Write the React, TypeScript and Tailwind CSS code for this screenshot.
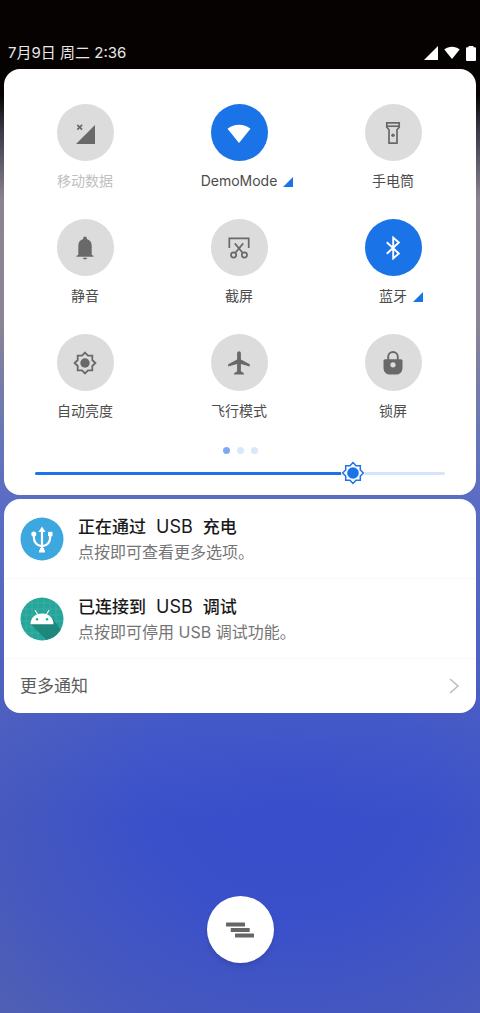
import React, { useState } from 'react';

interface Tile {
    label: string;
    icon: React.ReactNode;
    active?: boolean;
    disabled?: boolean;
    expandable?: boolean;
}

interface Notice {
    title: [string, string];
    text: string;
    icon: React.ReactNode;
}

const MAX_BRIGHTNESS = 255;

const STAR =
    'M12 1.6l3 3.1h4.3V9l3.1 3-3.1 3v4.3H15l-3 3.1-3-3.1H4.7V15l-3.1-3 3.1-3V4.7H9z';
const WEDGE = 'M12 22L.5 7.8C3.8 5 7.8 3.7 12 3.7s8.200 1.300 11.500 4.100z';

const Icon: React.FC<{ children: React.ReactNode }> = ({ children }) => (
    <svg viewBox="0 0 24 24" className="h-6 w-6" fill="currentColor" aria-hidden="true">
        {children}
    </svg>
);

const tiles: Tile[] = [
    {
        label: '移动数据',
        disabled: true,
        icon: (
            <Icon>
                <path d="M22 4v19H3z" />
                <path d="M4.300 3.800l4.800 4.800M9.100 3.800L4.300 8.600" stroke="currentColor" strokeWidth="1.700" />
            </Icon>
        ),
    },
    {
        label: 'DemoMode',
        active: true,
        expandable: true,
        icon: (
            <Icon>
                <path d={WEDGE} />
            </Icon>
        ),
    },
    {
        label: '手电筒',
        icon: (
            <Icon>
                <g fill="none" stroke="currentColor" strokeWidth="1.700">
                    <path d="M5.800 1.800h12.400v4.400l-2.200 2.600v13.400H8V8.800L5.800 6.200z" />
                    <path d="M5.800 5.200h12.400" />
                </g>
                <circle cx="12" cy="14.300" r="1.700" />
            </Icon>
        ),
    },
    {
        label: '静音',
        icon: (
            <Icon>
                <path d="M12 .5c1 0 1.800.8 1.800 1.800v.6c3 .8 4.900 3.300 4.900 6.500v9.300l1.800 1.200v.9h-17v-.9l1.800-1.200V9.400c0-3.200 1.900-5.700 4.900-6.500v-.6C10.200 1.300 11 .5 12 .5z" />
                <path d="M9.800 21.800h4.400c-.2 1.100-1.100 1.700-2.200 1.700s-2-.6-2.200-1.700z" />
            </Icon>
        ),
    },
    {
        label: '截屏',
        icon: (
            <Icon>
                <g fill="none" stroke="currentColor" strokeWidth="1.700">
                    <path d="M2.300 12V2.300h19.400V12" />
                    <circle cx="6.600" cy="19" r="2.600" />
                    <circle cx="17.400" cy="19" r="2.600" />
                    <path d="M8.200 17l8-9.600M15.800 17l-8-9.600" />
                </g>
            </Icon>
        ),
    },
    {
        label: '蓝牙',
        active: true,
        expandable: true,
        icon: (
            <Icon>
                <path
                    d="M5.800 6.200L17.800 17.500l-5.600 4.900V1.600l5.600 4.900L5.800 17.800"
                    fill="none"
                    stroke="currentColor"
                    strokeWidth="1.900"
                />
            </Icon>
        ),
    },
    {
        label: '自动亮度',
        icon: (
            <Icon>
                <path d={STAR} fill="none" stroke="currentColor" strokeWidth="1.800" />
                <circle cx="12" cy="12" r="4.700" />
            </Icon>
        ),
    },
    {
        label: '飞行模式',
        icon: (
            <Icon>
                <path d="M12 .3c-1.100 0-1.900.8-1.900 1.900v6.300L1.200 13.200v2.200l8.900-2.500v7.400l-3 2v1.200h9.800v-1.200l-3-2v-7.400l8.900 2.500v-2.200l-8.900-4.700V2.200c0-1.100-.8-1.900-1.900-1.900z" />
            </Icon>
        ),
    },
    {
        label: '锁屏',
        icon: (
            <Icon>
                <path d="M7.200 9V5.800a4.800 4.800 0 019.600 0V9" fill="none" stroke="currentColor" strokeWidth="1.900" />
                <path
                    fillRule="evenodd"
                    d="M4 8.200h16a1.500 1.500 0 011.500 1.500v7.500a6.300 6.300 0 01-6.300 6.300H8.800a6.300 6.300 0 01-6.300-6.300V9.700A1.500 1.500 0 014 8.200zm8 3a2.600 2.600 0 100 5.200 2.600 2.600 0 000-5.200z"
                />
            </Icon>
        ),
    },
];

const UsbIcon: React.FC = () => (
    <svg viewBox="0 0 44 44" className="h-11 w-11 shrink-0" aria-hidden="true">
        <circle cx="22" cy="22" r="21.500" fill="#3da7e0" />
        <g fill="none" stroke="#fff" strokeWidth="2.200">
            <path d="M22 14v19" />
            <path d="M13.800 17.500v2.500c0 5 3.200 8.500 8.200 9.300 5-.8 8.200-4.300 8.200-9.300v-2.500" />
        </g>
        <g fill="#fff">
            <path d="M22 9.500l3.500 5.500h-7z" />
            <circle cx="13.800" cy="17" r="2.500" />
            <path d="M28 14.800h4.500v4.400H28z" />
            <path d="M20 31h4v1.500l1 1v2h-6v-2l1-1z" />
        </g>
    </svg>
);

const AndroidIcon: React.FC = () => (
    <svg viewBox="0 0 44 44" className="h-11 w-11 shrink-0" aria-hidden="true">
        <clipPath id="disc">
            <circle cx="22" cy="22" r="21.500" />
        </clipPath>
        <g clipPath="url(#disc)">
            <path d="M0 0h44v44H0z" fill="#26a69a" />
            <path
                d="M6 0v44M12 0v44M18 0v44M24 0v44M30 0v44M36 0v44M0 6h44M0 12h44M0 18h44M0 24h44M0 30h44M0 36h44"
                stroke="#fff"
                strokeOpacity=".15"
                strokeWidth=".6"
            />
            <path d="M10.500 27L28 44.500h16V37L30.500 18.500 33 27z" fill="#1c7f74" fillOpacity=".8" />
        </g>
        <path d="M10.500 27.200c0-6.200 4.600-10.700 11.500-10.700s11.500 4.500 11.500 10.700z" fill="#fff" />
        <path d="M15 13.200l3 4.800M29 13.200L26 18" stroke="#fff" strokeWidth="1.100" />
        <circle cx="17" cy="22.200" r="1.200" fill="#26a69a" />
        <circle cx="27" cy="22.200" r="1.200" fill="#26a69a" />
    </svg>
);

const notices: Notice[] = [
    { title: ['正在通过', '充电'], text: '点按即可查看更多选项。', icon: <UsbIcon /> },
    { title: ['已连接到', '调试'], text: '点按即可停用 USB 调试功能。', icon: <AndroidIcon /> },
];

const StatusBar: React.FC = () => (
    <header className="flex items-end justify-between pt-[41px] pb-1 pl-2 pr-1 text-[#e8e8e8]">
        <span className="text-[15px] leading-6">7月9日 周二 2:36</span>
        <div className="flex h-6 items-center gap-1.5 text-white">
            <svg viewBox="0 0 14 14" className="h-3.5 w-3.5" fill="currentColor" aria-hidden="true">
                <path d="M14 0v14H0z" />
            </svg>
            <svg viewBox="0 3 24 20" className="h-3.5 w-4" fill="currentColor" aria-hidden="true">
                <path d={WEDGE} />
            </svg>
            <svg viewBox="0 0 10 15" className="h-[15px] w-2.5" fill="currentColor" aria-hidden="true">
                <path d="M2.500 0h5v1.200H9a1 1 0 011 1V14a1 1 0 01-1 1H1a1 1 0 01-1-1V2.200a1 1 0 011-1h1.500z" />
            </svg>
        </div>
    </header>
);

const QuickTile: React.FC<{ tile: Tile }> = ({ tile }) => (
    <button type="button" className="flex flex-col items-center gap-2.5">
        <span
            className={`flex h-[57px] w-[57px] items-center justify-center rounded-full ${
                tile.active ? 'bg-[#1b73e8] text-white' : 'bg-[#dcdcdc] text-[#696969]'
            }`}
        >
            {tile.icon}
        </span>
        <span className={`relative text-sm ${tile.disabled ? 'text-[#c0c0c0]' : 'text-[#4c4c4c]'}`}>
            {tile.label}
            {tile.expandable && (
                <svg
                    viewBox="0 0 10 10"
                    className="absolute bottom-1 left-full ml-1.5 h-2.5 w-2.5 text-[#1b73e8]"
                    fill="currentColor"
                    aria-hidden="true"
                >
                    <path d="M10 0v10H0z" />
                </svg>
            )}
        </span>
    </button>
);

const BrightnessSlider: React.FC = () => {
    const [value, setValue] = useState(198);
    const percent = (value / MAX_BRIGHTNESS) * 100;

    return (
        <div className="relative mx-[31px] flex h-6 items-center">
            <div className="h-[3px] flex-1 rounded-full bg-[#d5e4fa]">
                <div className="h-full rounded-full bg-[#1b73e8]" style={{ width: `${percent}%` }}></div>
            </div>
            <svg
                viewBox="0 0 24 24"
                className="absolute h-6 w-6 -translate-x-1/2"
                style={{ left: `${percent}%` }}
                aria-hidden="true"
            >
                <path d={STAR} fill="#fff" stroke="#fff" strokeWidth="4" />
                <path d={STAR} fill="#fff" stroke="#1b73e8" strokeWidth="1.500" />
                <circle cx="12" cy="12" r="5.800" fill="#1b73e8" />
            </svg>
            <input
                type="range"
                min="0"
                max={MAX_BRIGHTNESS}
                value={value}
                onChange={(e) => setValue(Number(e.target.value))}
                aria-label="亮度"
                className="absolute inset-0 h-full w-full cursor-pointer opacity-0"
            />
        </div>
    );
};

const App: React.FC = () => {
    return (
        <div className="min-h-screen bg-[linear-gradient(to_bottom,#060202_0px,#060202_95px,#3a3846_130px,#8b8490_200px,#8b8594_320px,#6b78b4_420px,#5a6cc4_500px,transparent_820px),radial-gradient(100%_42%_at_60%_78%,#374dcb_0%,#3a50ca_30%,#4759bd_62%,#5a68a8_100%)] font-['Inter','Noto_Sans_CJK_SC',sans-serif]">
            <div className="flex min-h-screen flex-col">
                <StatusBar />
                <main className="flex flex-1 flex-col px-1">
                    <section className="rounded-2xl bg-white pt-[35px] pb-2.5">
                        <div className="grid grid-cols-3 gap-y-7 pl-1 pr-1.5">
                            {tiles.map((tile) => (
                                <QuickTile key={tile.label} tile={tile} />
                            ))}
                        </div>
                        <div className="mt-[26px] mb-[7px] flex justify-center gap-[7px]">
                            <span className="h-[7px] w-[7px] rounded-full bg-[#7faaf3]"></span>
                            <span className="h-[7px] w-[7px] rounded-full bg-[#d9e6fb]"></span>
                            <span className="h-[7px] w-[7px] rounded-full bg-[#d9e6fb]"></span>
                        </div>
                        <BrightnessSlider />
                    </section>

                    <section className="mt-1 rounded-2xl bg-white">
                        <ul>
                            {notices.map((notice) => (
                                <li
                                    key={notice.text}
                                    className="flex h-20 items-center gap-3.5 border-b border-[#f8f8f8] px-4"
                                >
                                    {notice.icon}
                                    <div>
                                        <h2 className="flex items-baseline gap-2.5 text-[17px] leading-[26px] font-medium text-[#1a1a1a]">
                                            <span>{notice.title[0]}</span>
                                            <span className="text-lg leading-[26px] font-normal">USB</span>
                                            <span>{notice.title[1]}</span>
                                        </h2>
                                        <p className="text-base text-[#757575]">{notice.text}</p>
                                    </div>
                                </li>
                            ))}
                        </ul>
                        <button
                            type="button"
                            className="flex w-full items-center justify-between px-4 py-[15px] text-[17px] leading-6 text-[#5c5c5c]"
                        >
                            更多通知
                            <svg
                                viewBox="0 0 12 16"
                                className="h-4 w-3"
                                fill="none"
                                stroke="#bdbdbd"
                                strokeWidth="1.600"
                                aria-hidden="true"
                            >
                                <path d="M2 1l8 7-8 7" />
                            </svg>
                        </button>
                    </section>

                    <button
                        type="button"
                        aria-label="清除全部通知"
                        className="mx-auto mt-auto mb-[50px] flex h-[67px] w-[67px] items-center justify-center rounded-full bg-white text-[#666] shadow-md"
                    >
                        <svg viewBox="0 0 28 16" className="h-4 w-7" fill="currentColor" aria-hidden="true">
                            <rect x="0" y=".5" width="19" height="4" rx=".5" />
                            <rect x="4.700" y="6" width="19" height="4" rx=".5" />
                            <rect x="9" y="11.500" width="19" height="4" rx=".5" />
                        </svg>
                    </button>
                </main>
            </div>
        </div>
    );
};

export default App;
